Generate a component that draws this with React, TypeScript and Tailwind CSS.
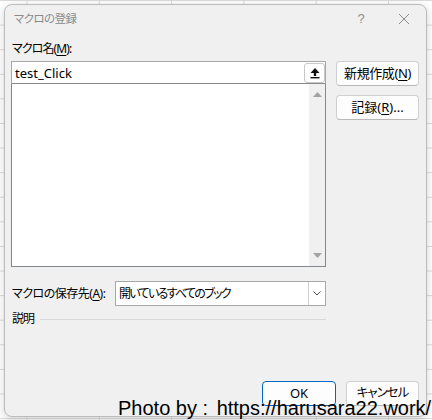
import React from "react";

const font = "font-['Noto_Sans','Noto_Sans_CJK_JP',sans-serif] [font-feature-settings:'palt']";

function Key({ k }: { k: string }) {
  return <span className="underline underline-offset-2">{k}</span>;
}

function Btn({
  children,
  w,
  primary = false,
}: {
  children: React.ReactNode;
  w: string;
  primary?: boolean;
}) {
  return (
    <div
      className={`${w} h-[25px] flex items-center justify-center rounded-[4px] bg-[#fdfdfd] text-[13px] text-black whitespace-nowrap border ${
        primary ? "border-[#0067c0]" : "border-[#d0d0d0] border-b-[#b8b8b8]"
      }`}
    >
      {children}
    </div>
  );
}

function CollapseIcon() {
  return (
    <svg width="12" height="12" viewBox="0 0 12 12">
      <path d="M6 1 L10.5 6 L7.2 6 L7.2 9 L4.8 9 L4.8 6 L1.5 6 Z" fill="#111" />
      <rect x="1.5" y="10" width="9" height="1.4" fill="#111" />
    </svg>
  );
}

export default function App() {
  return (
    <div
      className={`relative w-[432px] h-[420px] overflow-hidden bg-white bg-[linear-gradient(to_right,#dadada_1px,transparent_1px),linear-gradient(to_bottom,#dadada_1px,transparent_1px)] bg-[size:72.3px_24.6px] bg-[position:26.5px_0,0_0] p-[4px] ${font}`}
    >
      <div className="w-[423px] h-[413px] flex flex-col rounded-[8px] border border-[#bcbcbc] bg-[#f0f0f0] shadow-[0_2px_8px_rgba(0,0,0,0.18)]">
        {/* title bar */}
        <div className="h-[28px] flex items-center pl-[9px] text-[11.5px] text-[#8b8b8b]">
          <span className="flex-1 tracking-[-0.6px]">マクロの登録</span>
          <span className="w-[20px] text-center text-[13px] font-['Liberation_Sans',sans-serif] text-[#8f8f8f] mr-[27px]">?</span>
          <svg width="12" height="12" viewBox="0 0 12 12" className="mr-[16px]">
            <path d="M1 1 L11 11 M11 1 L1 11" stroke="#8b8b8b" strokeWidth="1" />
          </svg>
        </div>

        {/* body */}
        <div className="flex pl-[6px] pr-[7px] text-[12px] text-black">
          <div className="w-[315px] flex flex-col">
            <div className="mt-[8px] h-[16px] leading-[16px] pl-[1px] tracking-[-0.9px] whitespace-nowrap">
              マクロ名(<Key k="M" />):
            </div>
            <div className="mt-[4px] h-[23px] flex items-center bg-white border border-[#a8a8a8] border-b-[#8a8a8a]">
              <span className="flex-1 pl-[3px] leading-[16px] text-[13px]">test_Click</span>
              <div className="w-[21px] h-[20px] flex items-center justify-center rounded-[3px] border border-[#c8c8c8] bg-white">
                <CollapseIcon />
              </div>
            </div>
            <div className="h-[183px] flex bg-white border border-t-0 border-[#828790]">
              <div className="flex-1" />
              <div className="w-[16px] flex flex-col items-center justify-between py-[8px] bg-[#f0f0f0]">
                <svg width="9" height="5" viewBox="0 0 9 5">
                  <path d="M4.5 0 L9 5 L0 5 Z" fill="#a3a3a3" />
                </svg>
                <svg width="9" height="5" viewBox="0 0 9 5">
                  <path d="M0 0 L9 0 L4.5 5 Z" fill="#a3a3a3" />
                </svg>
              </div>
            </div>

            <div className="mt-[14px] flex items-center">
              <div className="w-[104px] pl-[1px] leading-[16px] tracking-[-0.5px] whitespace-nowrap">
                マクロの保存先(<Key k="A" />):
              </div>
              <div className="w-[211px] h-[25px] flex items-center bg-white border border-[#a8a8a8]">
                <span className="flex-1 pl-[3px] leading-[16px] tracking-[-1.7px] whitespace-nowrap">
                  開いているすべてのブック
                </span>
                <div className="w-[17px] h-full flex items-center justify-center border-l border-[#cfcfcf]">
                  <svg width="8" height="5" viewBox="0 0 8 5">
                    <path d="M0.5 0.5 L4 4 L7.5 0.5" stroke="#555" strokeWidth="1" fill="none" />
                  </svg>
                </div>
              </div>
            </div>

            <div className="mt-[5px] flex items-center">
              <span className="pl-[1px] leading-[16px] tracking-[-1px]">説明</span>
              <div className="flex-1 ml-[6px] h-px bg-[#d8d8d8]" />
            </div>
          </div>

          <div className="ml-[10px] w-[83px] flex flex-col gap-[9px] pt-[28px]">
            <Btn w="w-[83px]">
              <span className="tracking-[-0.4px]">
                新規作成(<Key k="N" />)
              </span>
            </Btn>
            <Btn w="w-[83px]">
              記録(<Key k="R" />)...
            </Btn>
          </div>
        </div>

        {/* bottom buttons */}
        <div className="mt-auto flex justify-end gap-[10px] pr-[7px] pb-[10px]">
          <Btn w="w-[74px]" primary>
            OK
          </Btn>
          <Btn w="w-[73px]">
            <span className="tracking-[-1px] text-[12.5px]">キャンセル</span>
          </Btn>
        </div>
      </div>

      <div className="absolute left-[118px] top-[398px] whitespace-nowrap text-[20px] leading-[20px] text-black font-['Liberation_Sans',sans-serif] [font-feature-settings:normal]">
        Photo by : <span className="ml-[3px]">https://harusara22.work/</span>
      </div>
    </div>
  );
}
